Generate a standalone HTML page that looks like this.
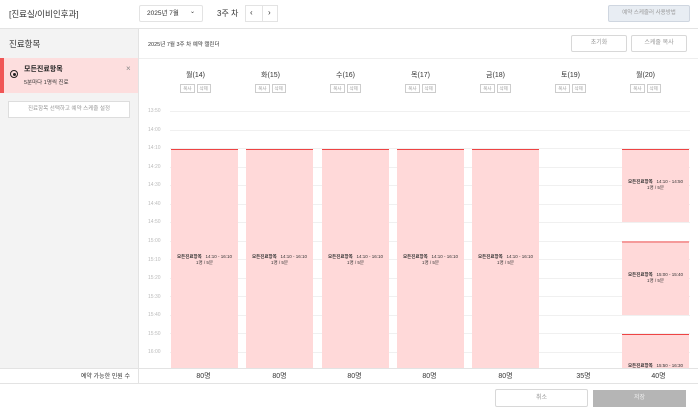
<!DOCTYPE html>
<html><head><meta charset="utf-8"><style>
*{box-sizing:border-box;margin:0;padding:0}
body{width:698px;height:413px;overflow:hidden;background:#fff;font-family:"Liberation Sans","Noto Sans CJK KR",sans-serif;color:#222;position:relative}
.a{position:absolute}
.hl{position:absolute;left:0;right:0;height:1px;background:#e6e6e6}
.btn{position:absolute;border:1px solid #d8d8d8;border-radius:2px;font-size:6px;color:#999;text-align:center;background:#fff}
.day{position:absolute;width:75px;text-align:center;font-size:7px;color:#333;line-height:9px}
.day .r{margin-top:4px;line-height:6px}
.sm{display:inline-block;border:1px solid #ccc;font-size:4.5px;color:#999;padding:1px 2px;margin:0 1px;line-height:5px}
.tl{position:absolute;left:148px;font-size:5px;color:#bbb}
.gl{position:absolute;left:170px;right:8px;height:1px;background:#f0f0f0}
.blk{position:absolute;width:67px;background:#ffd9d9;border-top:1px solid #e44;text-align:center;font-size:4.5px;color:#333}
.blk b{font-weight:bold}
.blk div{position:absolute;left:0;right:0}
.cnt{position:absolute;top:371px;width:75px;text-align:center;font-size:7px;color:#333}
</style></head><body>
<div class="a" style="left:9px;top:8px;font-size:8.5px;color:#333">[진료실/이비인후과]</div>
<div class="a" style="left:139px;top:5px;width:64px;height:17px;border:1px solid #e3e3e3;border-radius:2px;font-size:6.5px;padding:0 7px;line-height:15px;color:#333">2025년 7월<span style="position:absolute;right:7px;top:-1px;font-size:6px">⌄</span></div>
<div class="a" style="left:217px;top:8px;font-size:8px;color:#333">3주 차</div>
<div class="a" style="left:245px;top:5px;width:33px;height:17px;border:1px solid #e3e3e3;font-size:8px;color:#333"><span style="position:absolute;left:4px;top:2px">‹</span><span style="position:absolute;left:16px;top:0;height:15px;border-left:1px solid #e3e3e3"></span><span style="position:absolute;left:22px;top:2px">›</span></div>
<div class="a" style="left:608px;top:5px;width:82px;height:17px;border:1px solid #cfd6e0;background:#e8edf3;border-radius:2px;font-size:5.5px;color:#999;text-align:center;line-height:15px">예약 스케줄러 사용방법</div>
<div class="hl" style="top:28px;background:#e3e3e3"></div>
<div class="a" style="left:0;top:29px;width:139px;height:340px;background:#f3f3f3;border-right:1px solid #e3e3e3"></div>
<div class="a" style="left:9px;top:38px;font-size:8.5px;color:#333">진료항목</div>
<div class="a" style="left:0;top:58px;width:138px;height:35px;background:#fddede;border-left:4px solid #f05555"></div>
<div class="a" style="left:10px;top:70px;width:8px;height:8px;border:1px solid #222;border-radius:50%"><div class="a" style="left:1.5px;top:1.5px;width:3px;height:3px;border-radius:50%;background:#222"></div></div>
<div class="a" style="left:24px;top:64px;font-size:7px;font-weight:bold;color:#222">모든진료항목</div>
<div class="a" style="left:24px;top:78px;font-size:5.5px;color:#333">5분마다 1명씩 진료</div>
<div class="a" style="left:126px;top:64px;font-size:8px;color:#888">×</div>
<div class="a" style="left:8px;top:101px;width:122px;height:17px;border:1px solid #ddd;background:#fff;font-size:5.5px;color:#999;text-align:center;line-height:15px">진료항목 선택하고 예약 스케줄 설정</div>
<div class="a" style="left:148px;top:40px;font-size:5.5px;color:#333">2025년 7월 3주 차 예약 캘린더</div>
<div class="btn" style="left:571px;top:35px;width:56px;height:17px;line-height:15px">초기화</div>
<div class="btn" style="left:631px;top:35px;width:56px;height:17px;line-height:15px">스케줄 복사</div>
<div class="a" style="left:139px;top:58px;right:0;height:1px;background:#eee"></div>
<div class="day" style="left:158px;top:71px">월(14)<div class="r"><span class="sm">복사</span><span class="sm">삭제</span></div></div>
<div class="day" style="left:233px;top:71px">화(15)<div class="r"><span class="sm">복사</span><span class="sm">삭제</span></div></div>
<div class="day" style="left:308px;top:71px">수(16)<div class="r"><span class="sm">복사</span><span class="sm">삭제</span></div></div>
<div class="day" style="left:383px;top:71px">목(17)<div class="r"><span class="sm">복사</span><span class="sm">삭제</span></div></div>
<div class="day" style="left:458px;top:71px">금(18)<div class="r"><span class="sm">복사</span><span class="sm">삭제</span></div></div>
<div class="day" style="left:533px;top:71px">토(19)<div class="r"><span class="sm">복사</span><span class="sm">삭제</span></div></div>
<div class="day" style="left:608px;top:71px">월(20)<div class="r"><span class="sm">복사</span><span class="sm">삭제</span></div></div>
<div class="gl" style="top:111px"></div><div class="tl" style="top:108px">13:50</div>
<div class="gl" style="top:130px"></div><div class="tl" style="top:127px">14:00</div>
<div class="gl" style="top:148px"></div><div class="tl" style="top:145px">14:10</div>
<div class="gl" style="top:167px"></div><div class="tl" style="top:164px">14:20</div>
<div class="gl" style="top:185px"></div><div class="tl" style="top:182px">14:30</div>
<div class="gl" style="top:204px"></div><div class="tl" style="top:201px">14:40</div>
<div class="gl" style="top:222px"></div><div class="tl" style="top:219px">14:50</div>
<div class="gl" style="top:241px"></div><div class="tl" style="top:238px">15:00</div>
<div class="gl" style="top:259px"></div><div class="tl" style="top:257px">15:10</div>
<div class="gl" style="top:278px"></div><div class="tl" style="top:275px">15:20</div>
<div class="gl" style="top:296px"></div><div class="tl" style="top:294px">15:30</div>
<div class="gl" style="top:315px"></div><div class="tl" style="top:312px">15:40</div>
<div class="gl" style="top:333px"></div><div class="tl" style="top:331px">15:50</div>
<div class="gl" style="top:352px"></div><div class="tl" style="top:349px">16:00</div>
<div class="blk" style="left:171px;top:149px;height:219px"><div style="top:104px"><b>모든진료항목</b>&nbsp;&nbsp; 14:10 - 16:10<br>1명 / 5분</div></div>
<div class="blk" style="left:246px;top:149px;height:219px"><div style="top:104px"><b>모든진료항목</b>&nbsp;&nbsp; 14:10 - 16:10<br>1명 / 5분</div></div>
<div class="blk" style="left:322px;top:149px;height:219px"><div style="top:104px"><b>모든진료항목</b>&nbsp;&nbsp; 14:10 - 16:10<br>1명 / 5분</div></div>
<div class="blk" style="left:397px;top:149px;height:219px"><div style="top:104px"><b>모든진료항목</b>&nbsp;&nbsp; 14:10 - 16:10<br>1명 / 5분</div></div>
<div class="blk" style="left:472px;top:149px;height:219px"><div style="top:104px"><b>모든진료항목</b>&nbsp;&nbsp; 14:10 - 16:10<br>1명 / 5분</div></div>
<div class="blk" style="left:622px;top:149px;height:73px"><div style="top:29px"><b>모든진료항목</b>&nbsp;&nbsp; 14:10 - 14:50<br>1명 / 5분</div></div>
<div class="blk" style="left:622px;top:241px;height:74px;border-top:2px solid #f59a9a"><div style="top:29px"><b>모든진료항목</b>&nbsp;&nbsp; 15:00 - 15:40<br>1명 / 5분</div></div>
<div class="blk" style="left:622px;top:334px;height:34px;overflow:hidden"><div style="top:28px"><b>모든진료항목</b>&nbsp;&nbsp; 15:50 - 16:30</div></div>
<div class="hl" style="top:368px;background:#e3e3e3"></div>
<div class="a" style="left:0;top:369px;width:139px;height:14px;border-right:1px solid #e3e3e3"></div>
<div class="a" style="left:0;top:371px;width:130px;text-align:right;font-size:6px;color:#333">예약 가능한 인원 수</div>
<div class="cnt" style="left:166px">80명</div>
<div class="cnt" style="left:242px">80명</div>
<div class="cnt" style="left:317px">80명</div>
<div class="cnt" style="left:392px">80명</div>
<div class="cnt" style="left:468px">80명</div>
<div class="cnt" style="left:546px">35명</div>
<div class="cnt" style="left:621px">40명</div>
<div class="hl" style="top:383px;background:#e3e3e3"></div>
<div class="a" style="left:495px;top:389px;width:93px;height:18px;border:1px solid #d8d8d8;border-radius:2px;font-size:6px;color:#999;text-align:center;line-height:16px">취소</div>
<div class="a" style="left:593px;top:390px;width:93px;height:17px;background:#b5b5b5;font-size:6px;color:#eee;text-align:center;line-height:17px">저장</div>
</body></html>
